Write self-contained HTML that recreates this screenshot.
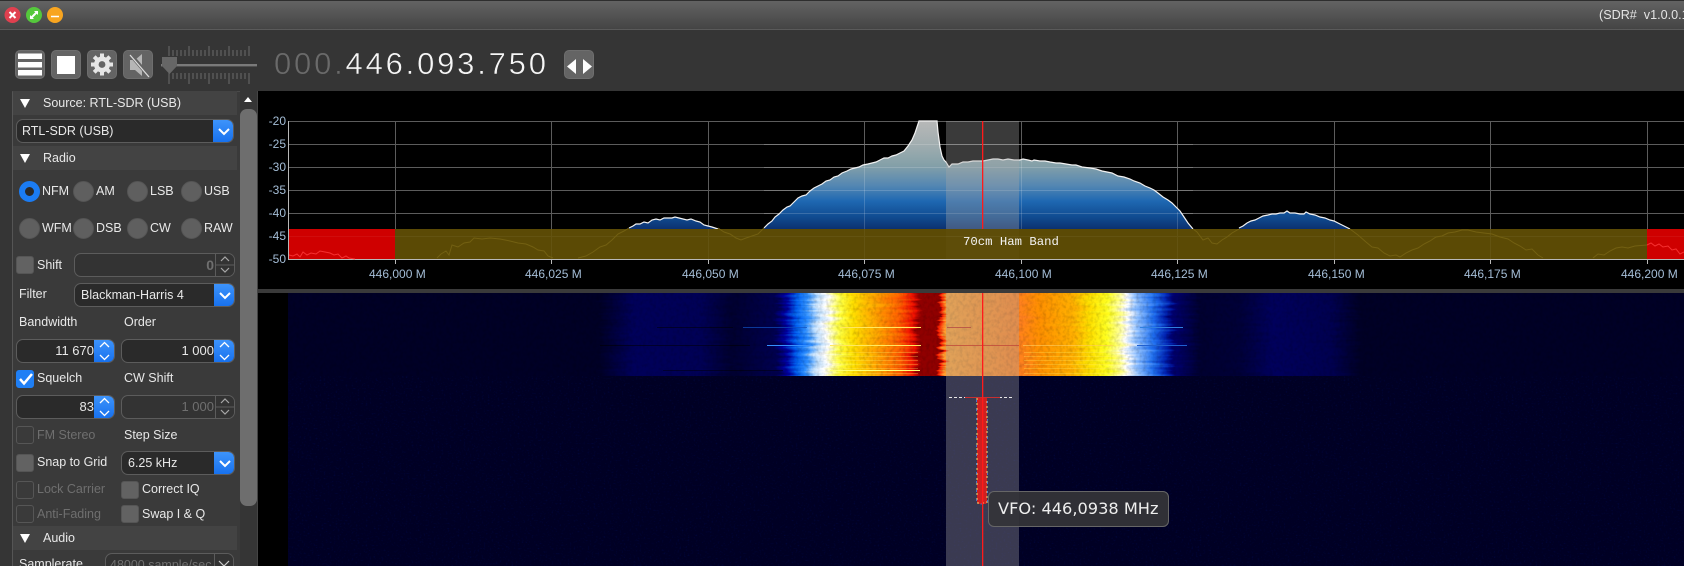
<!DOCTYPE html>
<html><head><meta charset="utf-8"><title>SDR#</title>
<style>
html,body{margin:0;padding:0;width:1684px;height:566px;overflow:hidden;background:#353535}
body{position:relative;font:12.5px "Liberation Sans",sans-serif;color:#e8e8e8}
div,span.a{position:absolute;box-sizing:border-box}
svg{position:absolute;left:0;top:0;display:block}
.t{white-space:nowrap;line-height:16px;height:16px}
.dis{color:#6f6f6f}
.hd{left:13px;width:224px;height:24px;background:#434343}
.hd .t{left:30px;top:4px}
.tri{left:7px;top:8px;width:0;height:0;border-left:5px solid transparent;border-right:5px solid transparent;border-top:9px solid #fff}
.box{background:#2a2a2a;border:1px solid #5c5c5c;border-radius:7px;overflow:hidden;height:24px}
.box .t{top:3px}
.blue{top:-1px;bottom:-1px;right:-1px;width:21px;background:linear-gradient(#3f95fb,#1670ee)}
.gray{top:-1px;bottom:-1px;right:-1px;width:20px;background:#333;border-left:1px solid #5c5c5c}
.cb{width:18px;height:18px;border-radius:3px;background:#626262;border:1px solid #555}
.cb.off{background:transparent;border-color:#565656}
.cb.on{background:#1f7ff5;border-color:#1f7ff5}
.rd{width:21px;height:21px;border-radius:50%;background:#5f5f5f;border:1px solid #555}
.rd.on{background:#2a2a2a;border:6px solid #1b7cf3}
.btn{top:50px;width:30px;height:29px;border-radius:5px;background:#646464;border:1px solid #6e6e6e}
.lab{color:#a4bdd6;font-size:12px}
</style></head><body>

<!-- title bar -->
<div style="left:0;top:0;width:1684px;height:30px;background:linear-gradient(#636363,#444);border-top:1px solid #2e2e2e;border-bottom:1px solid #5a5a5a"></div>
<svg width="70" height="30" style="left:0;top:0">
<circle cx="12.5" cy="15" r="8" fill="#e0404f"/><path d="M9.5 12l6 6M15.5 12l-6 6" stroke="#fff" stroke-width="2"/>
<circle cx="34" cy="15" r="8" fill="#55c83c"/><path d="M30.5 18.5l7-7" stroke="#fff" stroke-width="2"/><path d="M38 11v4l-4-4zM30 19v-4l4 4z" fill="#fff"/>
<circle cx="55" cy="15" r="8" fill="#f8a520"/><path d="M51 16.500h8" stroke="#fff" stroke-width="1.500"/>
</svg>
<div class="t" style="left:1599px;top:7px;font-size:12.600px;color:#e4e4e4">(SDR# &nbsp;v1.0.0.1</div>

<!-- toolbar -->
<div class="btn" style="left:15px"></div>
<div class="btn" style="left:51px"></div>
<div class="btn" style="left:87px"></div>
<div class="btn" style="left:123px"></div>
<div class="btn" style="left:564px"></div>
<svg width="600" height="90" style="left:0;top:0">
<path d="M18 53.500h24v5.500h-24zM18 62h24v5.500h-24zM18 70h24v5.500h-24z" fill="#fff"/>
<rect x="57" y="56" width="18" height="18" fill="#fff"/>
<g fill="#e6e6e6"><circle cx="102" cy="64.500" r="8"/><g stroke="#e6e6e6" stroke-width="4"><path d="M102 53.500v22M91 64.500h22M94.200 56.700l15.600 15.600M109.800 56.700l-15.600 15.600"/></g></g><circle cx="102" cy="64.500" r="3.400" fill="#646464"/>
<path d="M130 60h5l7-6v22l-7-6h-5z" fill="#b6b6b6"/><path d="M130 54l19 22" stroke="#646464" stroke-width="4"/><path d="M130 55l19 22" stroke="#dcdcdc" stroke-width="1.300"/>
<path d="M169 46v10M189 46v10M209 46v10M229 46v10M249 46v10M173 50v6M177 50v6M181 50v6M185 50v6M193 50v6M197 50v6M201 50v6M205 50v6M213 50v6M217 50v6M221 50v6M225 50v6M233 50v6M237 50v6M241 50v6M245 50v6" stroke="#6c6c6c" stroke-width="1" shape-rendering="crispEdges"/>
<path d="M169 73v11M189 73v11M209 73v11M229 73v11M249 73v11M173 73v6M177 73v6M181 73v6M185 73v6M193 73v6M197 73v6M201 73v6M205 73v6M213 73v6M217 73v6M221 73v6M225 73v6M233 73v6M237 73v6M241 73v6M245 73v6" stroke="#6c6c6c" stroke-width="1" shape-rendering="crispEdges"/>
<rect x="161" y="64" width="96" height="2.400" fill="#7a7a7a"/>
<path d="M162 57h15v9l-7.500 8-7.500-8z" fill="#666"/>
<path d="M567 66.500l9-7.500v15zM592 66.500l-9-7.500v15z" fill="#fff"/>
</svg>
<div class="t" style="left:274px;top:47px;height:34px;line-height:34px;font-size:31px;letter-spacing:2.800px;color:#6a6a6a;-webkit-text-stroke:.5px #353535">000.<span style="color:#f6f6f6">446.093.750</span></div>

<!-- left panel -->
<div style="left:12px;top:91px;width:228px;height:475px;background:#3a3a3a;border-left:1px solid #555;border-top:1px solid #4a4a4a"></div>
<div style="left:240px;top:91px;width:18px;height:475px;background:#353535;border-right:1px solid #444"></div>
<div style="left:240px;top:109px;width:17px;height:397px;background:#6e6e6e;border-radius:7px"></div>
<div style="left:244px;top:97px;width:0;height:0;border-left:4px solid transparent;border-right:4px solid transparent;border-bottom:5px solid #fff"></div>

<div class="hd" style="top:91px"><div class="tri"></div><div class="t">Source: RTL-SDR (USB)</div></div>
<div class="box" style="left:16px;top:119px;width:218px"><div class="t" style="left:5px">RTL-SDR (USB)</div><div class="blue"></div></div>
<div class="hd" style="top:146px"><div class="tri"></div><div class="t">Radio</div></div>

<div class="rd on" style="left:19px;top:181px"></div><div class="t" style="left:42px;top:183px">NFM</div>
<div class="rd" style="left:73px;top:181px"></div><div class="t" style="left:96px;top:183px">AM</div>
<div class="rd" style="left:127px;top:181px"></div><div class="t" style="left:150px;top:183px">LSB</div>
<div class="rd" style="left:181px;top:181px"></div><div class="t" style="left:204px;top:183px">USB</div>
<div class="rd" style="left:19px;top:218px"></div><div class="t" style="left:42px;top:220px">WFM</div>
<div class="rd" style="left:73px;top:218px"></div><div class="t" style="left:96px;top:220px">DSB</div>
<div class="rd" style="left:127px;top:218px"></div><div class="t" style="left:150px;top:220px">CW</div>
<div class="rd" style="left:181px;top:218px"></div><div class="t" style="left:204px;top:220px">RAW</div>

<div class="cb" style="left:16px;top:256px"></div><div class="t" style="left:37px;top:257px">Shift</div>
<div class="box" style="left:74px;top:253px;width:161px;background:#333"><div class="t dis" style="right:20px;font-size:14px;font-weight:bold">0</div><div class="gray"></div></div>
<div class="t" style="left:19px;top:286px">Filter</div>
<div class="box" style="left:74px;top:283px;width:161px"><div class="t" style="left:6px">Blackman-Harris 4</div><div class="blue"></div></div>

<div class="t" style="left:19px;top:314px">Bandwidth</div><div class="t" style="left:124px;top:314px">Order</div>
<div class="box" style="left:16px;top:339px;width:99px"><div class="t" style="right:20px;font-size:13px">11 670</div><div class="blue"></div></div>
<div class="box" style="left:121px;top:339px;width:114px"><div class="t" style="right:20px;font-size:13px">1 000</div><div class="blue"></div></div>

<div class="cb on" style="left:16px;top:370px"></div><div class="t" style="left:37px;top:370px">Squelch</div><div class="t" style="left:124px;top:370px">CW Shift</div>
<div class="box" style="left:16px;top:395px;width:99px"><div class="t" style="right:20px;font-size:13px">83</div><div class="blue"></div></div>
<div class="box" style="left:121px;top:395px;width:114px;background:#333"><div class="t dis" style="right:20px;font-size:13px">1 000</div><div class="gray"></div></div>

<div class="cb off" style="left:16px;top:426px"></div><div class="t dis" style="left:37px;top:427px">FM Stereo</div><div class="t" style="left:124px;top:427px">Step Size</div>
<div class="cb" style="left:16px;top:454px"></div><div class="t" style="left:37px;top:454px">Snap to Grid</div>
<div class="box" style="left:121px;top:451px;width:114px"><div class="t" style="left:6px">6.25 kHz</div><div class="blue"></div></div>
<div class="cb off" style="left:16px;top:481px"></div><div class="t dis" style="left:37px;top:481px">Lock Carrier</div>
<div class="cb" style="left:121px;top:481px"></div><div class="t" style="left:142px;top:481px">Correct IQ</div>
<div class="cb off" style="left:16px;top:505px"></div><div class="t dis" style="left:37px;top:506px">Anti-Fading</div>
<div class="cb" style="left:121px;top:505px"></div><div class="t" style="left:142px;top:506px">Swap I &amp; Q</div>

<div class="hd" style="top:526px"><div class="tri"></div><div class="t">Audio</div></div>
<div class="t" style="left:19px;top:556px">Samplerate</div>
<div class="box" style="left:105px;top:553px;width:129px;background:#333"><div class="t dis" style="left:4px">48000 sample/sec</div><div class="gray" style="width:20px"></div></div>

<!-- chevrons and checkmark over controls -->
<svg width="258" height="566" style="left:0;top:0;pointer-events:none">
<g fill="none" stroke="#fff" stroke-width="2">
<path d="M219 129l5 5 5-5"/>
<path d="M220 293l5 5 5-5"/>
<path d="M220 461l5 5 5-5"/>
<path d="M20 379l4 4.500 8-9.500" stroke-width="2.500"/>
</g>
<g fill="none" stroke="#fff" stroke-width="1.300">
<path d="M100 347l4.500-4.500 4.500 4.500M100 355l4.500 4.500 4.500-4.500"/>
<path d="M220 347l4.500-4.500 4.500 4.500M220 355l4.500 4.500 4.500-4.500"/>
<path d="M100 403l4.500-4.500 4.500 4.500M100 411l4.500 4.500 4.500-4.500"/>
</g>
<g fill="none" stroke="#a8a8a8" stroke-width="1.200">
<path d="M221 261l4-4 4 4M221 268l4 4 4-4"/>
<path d="M221 403l4-4 4 4M221 410l4 4 4-4"/>
<path d="M219 561l5 5 5-5" stroke="#ccc"/>
</g>
<path d="M215 265h20M215 407h20" stroke="#5c5c5c"/>
</svg>

<!-- spectrum + waterfall area -->
<div style="left:258px;top:91px;width:1426px;height:475px;background:#000"></div>
<div style="left:258px;top:289px;width:1426px;height:4px;background:#3a3a3a"></div>

<svg width="1684" height="566" style="left:0;top:0">
<defs>
<linearGradient id="sp" gradientUnits="userSpaceOnUse" x1="0" y1="121" x2="0" y2="232">
<stop offset="0" stop-color="#b8b8b8"/><stop offset=".2" stop-color="#a2aeb0"/><stop offset=".4" stop-color="#84a0a8"/><stop offset=".58" stop-color="#5487b2"/><stop offset=".72" stop-color="#1f68b2"/><stop offset=".86" stop-color="#104c92"/><stop offset="1" stop-color="#0b2b68"/>
</linearGradient>
<linearGradient id="wf" gradientUnits="userSpaceOnUse" x1="0" y1="0" x2="1684" y2="0">
<stop offset=".171" stop-color="#000026"/>
<stop offset=".356" stop-color="#000026"/>
<stop offset=".376" stop-color="#00005a"/>
<stop offset=".416" stop-color="#000056"/>
<stop offset=".435" stop-color="#000030"/>
<stop offset=".461" stop-color="#000050"/>
<stop offset=".467" stop-color="#0000a0"/>
<stop offset=".473" stop-color="#0060f0"/>
<stop offset=".479" stop-color="#3090ff"/>
<stop offset=".485" stop-color="#c0e0ff"/>
<stop offset=".491" stop-color="#fff"/>
<stop offset=".499" stop-color="#ffff40"/>
<stop offset=".5065" stop-color="#ffe000"/>
<stop offset=".521" stop-color="#ffa000"/>
<stop offset=".534" stop-color="#ff6000"/>
<stop offset=".542" stop-color="#f01000"/>
<stop offset=".5457" stop-color="#900000"/>
<stop offset=".5576" stop-color="#900000"/>
<stop offset=".5588" stop-color="#ff2000"/>
<stop offset=".5618" stop-color="#ffa030"/>
<stop offset=".605" stop-color="#ff8020"/>
<stop offset=".6176" stop-color="#ff9000"/>
<stop offset=".637" stop-color="#ffb000"/>
<stop offset=".647" stop-color="#ffe000"/>
<stop offset=".657" stop-color="#ffff20"/>
<stop offset=".665" stop-color="#ffffa0"/>
<stop offset=".669" stop-color="#fff"/>
<stop offset=".675" stop-color="#90c0ff"/>
<stop offset=".685" stop-color="#2070f0"/>
<stop offset=".693" stop-color="#0020b0"/>
<stop offset=".6965" stop-color="#000070"/>
<stop offset=".7126" stop-color="#000030"/>
<stop offset=".736" stop-color="#000038"/>
<stop offset=".756" stop-color="#00005c"/>
<stop offset=".79" stop-color="#000050"/>
<stop offset=".8076" stop-color="#000026"/>
<stop offset="1" stop-color="#000026"/>
</linearGradient>
<filter id="jag" x="0" y="0" width="100%" height="100%" color-interpolation-filters="sRGB">
<feTurbulence type="fractalNoise" baseFrequency=".02 .3" numOctaves="2" seed="7" result="n"/>
<feColorMatrix in="n" values="1 0 0 0 0  0 0 0 0 .5  0 0 0 0 0  0 0 0 0 1" result="m"/>
<feDisplacementMap in="SourceGraphic" in2="m" scale="16" xChannelSelector="R" yChannelSelector="G"/>
</filter>
<filter id="grain" x="0" y="0" width="100%" height="100%">
<feTurbulence type="fractalNoise" baseFrequency=".3 .25" numOctaves="2" seed="4"/>
<feColorMatrix values="0 0 0 0 0  0 0 0 0 0  0 0 0 0 0  0 0 0 1.600 -.65"/>
</filter>
<filter id="speck" x="0" y="0" width="100%" height="100%">
<feTurbulence type="fractalNoise" baseFrequency=".5 .6" numOctaves="2" seed="9"/>
<feColorMatrix values="0 0 0 0 0  0 0 0 0 .02  0 0 0 0 .45  0 0 0 3 -1.700"/>
</filter>
</defs>

<!-- grid -->
<g stroke="#5c5c5c" stroke-width="1" shape-rendering="crispEdges">
<path d="M288 121.500H1684M288 144.500H1684M288 167.500H1684M288 190.500H1684M288 213.500H1684M288 236.500H1684"/>
<path d="M395.500 121V259M551.500 121V259M708.500 121V259M864.500 121V259M1021.500 121V259M1177.500 121V259M1334.500 121V259M1490.500 121V259M1647.500 121V259"/>
</g>

<!-- spectrum fill -->
<path id="main" fill="url(#sp)" d="M764 228L768 224 772 221 775 217 779 214 783 210 787 207 790 206 794 202 798 198 802 196 806 195 810 191 814 188 818 186 822 184 826 181 830 180 834 177 838 176 842 173 847 171 851 169 855 168 859 167 863 165 868 164 872 163 876 162 880 160 884 158 888 158 892 156 896 155 900 153 904 151 908 146 912 140 915 133 917 127 919 121 937 121 938 132 940 147 942 156 944 160 946 162 949 167 952 164 958 164 963 162 968 162 973 161 978 161 983 161 988 160 993 159 998 159 1003 160 1008 159 1014 160 1020 160 1023 159 1028 160 1032 161 1034 160 1040 161 1045 161 1050 162 1056 163 1060 163 1066 164 1072 165 1076 165 1082 167 1090 168 1096 169 1102 171 1107 172 1112 173 1118 176 1124 177 1130 179 1134 181 1140 183 1145 186 1150 188 1154 190 1158 193 1163 197 1168 200 1172 203 1176 207 1180 211 1184 217 1188 223 1193 229V259H764Z"/>
<path fill="url(#sp)" d="M629 228L633 226 636 224 640 224 644 222 648 223 652 220 656 219 660 220 664 218 668 218 672 218 675 217 679 218 683 219 687 220 691 219 696 221 700 222 704 225 708 226 712 227 718 229V259H629Z"/>
<path fill="url(#sp)" d="M1239 228L1243 226 1247 223 1251 221 1255 220 1259 218 1263 216 1268 215 1272 214 1276 214 1280 213 1284 213 1287 211 1290 213 1295 213 1300 214 1304 214 1306 212 1310 214 1315 215 1320 217 1325 218 1330 220 1334 221 1338 223 1344 226 1350 229V259H1239Z"/>

<!-- grid through fill -->
<g stroke="#fff" stroke-opacity=".17" shape-rendering="crispEdges">
<path d="M764 144.500H1193M764 167.500H1193M764 190.500H1193M764 213.500H1193"/>
<path d="M864.500 165V229M1021.500 160V229M1177.500 212V229"/>
</g>

<!-- spectrum outline -->
<g fill="none" stroke="#f2f2f2" stroke-width="1.200">
<path d="M764 228L768 224 772 221 775 217 779 214 783 210 787 207 790 206 794 202 798 198 802 196 806 195 810 191 814 188 818 186 822 184 826 181 830 180 834 177 838 176 842 173 847 171 851 169 855 168 859 167 863 165 868 164 872 163 876 162 880 160 884 158 888 158 892 156 896 155 900 153 904 151 908 146 912 140 915 133 917 127 919 121 937 121 938 132 940 147 942 156 944 160 946 162 949 167 952 164 958 164 963 162 968 162 973 161 978 161 983 161 988 160 993 159 998 159 1003 160 1008 159 1014 160 1020 160 1023 159 1028 160 1032 161 1034 160 1040 161 1045 161 1050 162 1056 163 1060 163 1066 164 1072 165 1076 165 1082 167 1090 168 1096 169 1102 171 1107 172 1112 173 1118 176 1124 177 1130 179 1134 181 1140 183 1145 186 1150 188 1154 190 1158 193 1163 197 1168 200 1172 203 1176 207 1180 211 1184 217 1188 223 1193 229"/>
<path d="M629 228L633 226 636 224 640 224 644 222 648 223 652 220 656 219 660 220 664 218 668 218 672 218 675 217 679 218 683 219 687 220 691 219 696 221 700 222 704 225 708 226 712 227 718 229"/>
<path d="M1239 228L1243 226 1247 223 1251 221 1255 220 1259 218 1263 216 1268 215 1272 214 1276 214 1280 213 1284 213 1287 211 1290 213 1295 213 1300 214 1304 214 1306 212 1310 214 1315 215 1320 217 1325 218 1330 220 1334 221 1338 223 1344 226 1350 229"/>
</g>

<!-- passband + VFO line, spectrum -->
<rect x="946" y="121" width="73" height="138" fill="#a5a5a5" fill-opacity=".35"/>
<rect x="982" y="121" width="1.300" height="108" fill="#ff1a1a"/>

<!-- axes -->
<path d="M288.500 121V259.500H1684" fill="none" stroke="#b8b8b8" stroke-width="1" shape-rendering="crispEdges"/>
<path d="M395.500 259v5M551.500 259v5M708.500 259v5M864.500 259v5M1021.500 259v5M1177.500 259v5M1334.500 259v5M1490.500 259v5M1647.500 259v5" stroke="#b8b8b8" shape-rendering="crispEdges"/>

<!-- band -->
<rect x="289" y="229" width="106" height="30" fill="#cf0000"/>
<rect x="395" y="229" width="1252" height="30" fill="#5b4a05"/>
<rect x="1647" y="229" width="37" height="30" fill="#cf0000"/>
<rect x="946" y="229" width="73" height="30" fill="#fff" fill-opacity=".02"/>
<g stroke="#fff" stroke-opacity=".05" shape-rendering="crispEdges"><path d="M289 236.500H1684M551.500 229V259M708.500 229V259M864.500 229V259M1177.500 229V259M1334.500 229V259M1490.500 229V259"/></g>
<!-- traces under band -->
<g fill="none" stroke="#736012" stroke-width="1">
<path d="M437 258L441 254 446 251 449 255 452 245 458 247 464 243 470 242 474 238 482 239 490 238 500 239 510 241 518 243 526 244 533 247 538 250 544 251 548 256 553 258M578 258L586 256 593 252 600 247 606 245 612 240 618 234 624 231 629 228M718 228L724 232 730 234 736 238 741 240 746 238 752 236 758 234 764 228M1193 229L1197 232 1203 240 1208 238 1212 243 1217 244 1222 240 1227 237 1232 233 1239 229M1350 229L1358 235 1366 242 1372 247 1378 248 1384 253 1390 256 1396 255 1400 257 1406 253 1412 250 1418 248 1424 244 1430 241 1436 237 1442 236 1448 233 1455 232 1462 230 1468 230 1476 232 1484 233 1492 234 1500 237 1508 239 1514 243 1520 246 1526 250 1532 249 1538 255 1543 258M1593 258L1598 254 1604 255 1610 251 1616 248 1622 247 1628 248 1635 246 1647 245"/>
</g>
<g fill="none" stroke="#f53030" stroke-width="1">
<path d="M289 255L293 256 297 254 300 257 303 252 307 255 311 253 316 254 320 251 325 252 330 253 334 255 338 254 342 258 346 256 349 258 355 259"/>
<path d="M1647 245L1651 243 1655 246 1659 244 1663 247 1668 246 1672 250 1676 249 1680 254 1684 252"/>
</g>

<!-- waterfall -->
<rect x="288" y="293" width="1396" height="273" fill="#000024"/>
<rect x="288" y="376" width="1396" height="190" filter="url(#speck)" opacity=".16"/>
<rect x="288" y="293" width="1396" height="83" fill="url(#wf)" filter="url(#jag)"/>
<rect x="288" y="293" width="1396" height="83" filter="url(#grain)" opacity=".2"/>
<!-- lower-half banding -->
<path d="M832 352.500H918M832 356.500H918M832 360.500H918M832 364.500H918M832 368.500H918M832 373.500H918M1024 352.500H1120M1024 356.500H1120M1024 360.500H1120M1024 364.500H1120M1024 368.500H1120M1024 373.500H1120" stroke="#ffe860" stroke-opacity=".3" shape-rendering="crispEdges"/>
<!-- waterfall streaks -->
<rect x="743" y="327" width="64" height="1" fill="#0f50c0" fill-opacity=".7"/>
<rect x="840" y="327" width="81" height="1" fill="#ffe860"/>
<rect x="767" y="345" width="46" height="1" fill="#3590ff"/>
<rect x="830" y="345" width="91" height="1" fill="#ffe860"/>
<rect x="657" y="327" width="76" height="1" fill="#000" fill-opacity=".5"/>
<rect x="600" y="345" width="150" height="1" fill="#000" fill-opacity=".5"/>
<rect x="1023" y="345" width="90" height="1" fill="#ffd060" fill-opacity=".6"/>
<rect x="1140" y="327" width="43" height="1" fill="#3080e0"/>
<rect x="1137" y="345" width="50" height="1" fill="#2060d0"/>
<rect x="663" y="370" width="120" height="1" fill="#000" fill-opacity=".45"/>
<rect x="830" y="370" width="90" height="1" fill="#ffff70"/>

<!-- passband on waterfall -->
<rect x="946" y="293" width="73" height="273" fill="#a5a5a5" fill-opacity=".35"/>
<rect x="947" y="327" width="24" height="1" fill="#b04040" fill-opacity=".7"/>
<rect x="946" y="345" width="73" height="1" fill="#c04a3a" fill-opacity=".8"/>

<!-- signal column -->
<rect x="977" y="397" width="10" height="107" rx="2" fill="#cf2020"/>
<path d="M977 398V503H987V398" fill="none" stroke="#f2e070" stroke-width="1" stroke-dasharray="2 3"/>
<path d="M976.500 400V504H987.500V400" fill="none" stroke="#5080e0" stroke-width=".8" stroke-dasharray="2 7"/>
<path d="M949 397.500H1012" stroke="#e8e8e8" stroke-width="1" stroke-dasharray="3 2"/>
<path d="M965 397.500H1000" stroke="#c83030" stroke-width="1"/>
<rect x="982" y="293" width="1.300" height="273" fill="#ff1a1a"/>
</svg>

<!-- labels -->
<div class="t lab" style="right:1398px;top:113px">-20</div>
<div class="t lab" style="right:1398px;top:136px">-25</div>
<div class="t lab" style="right:1398px;top:159px">-30</div>
<div class="t lab" style="right:1398px;top:182px">-35</div>
<div class="t lab" style="right:1398px;top:205px">-40</div>
<div class="t lab" style="right:1398px;top:228px">-45</div>
<div class="t lab" style="right:1398px;top:251px">-50</div>
<div class="t lab" style="left:369px;top:266px">446,000 M</div>
<div class="t lab" style="left:525px;top:266px">446,025 M</div>
<div class="t lab" style="left:682px;top:266px">446,050 M</div>
<div class="t lab" style="left:838px;top:266px">446,075 M</div>
<div class="t lab" style="left:995px;top:266px">446,100 M</div>
<div class="t lab" style="left:1151px;top:266px">446,125 M</div>
<div class="t lab" style="left:1308px;top:266px">446,150 M</div>
<div class="t lab" style="left:1464px;top:266px">446,175 M</div>
<div class="t lab" style="left:1621px;top:266px">446,200 M</div>
<div class="t" style="left:963px;top:234px;font:12.300px/16px 'Liberation Mono',monospace;color:#f4f4f4">70cm Ham Band</div>

<!-- tooltip -->
<div style="left:988px;top:491px;width:181px;height:36px;background:rgba(52,52,56,.93);border:1px solid #666;border-radius:6px"></div>
<div class="t" style="left:998px;top:501px;font:16.200px/16px 'DejaVu Sans',sans-serif;color:#eee">VFO: 446,0938 MHz</div>
</body></html>
